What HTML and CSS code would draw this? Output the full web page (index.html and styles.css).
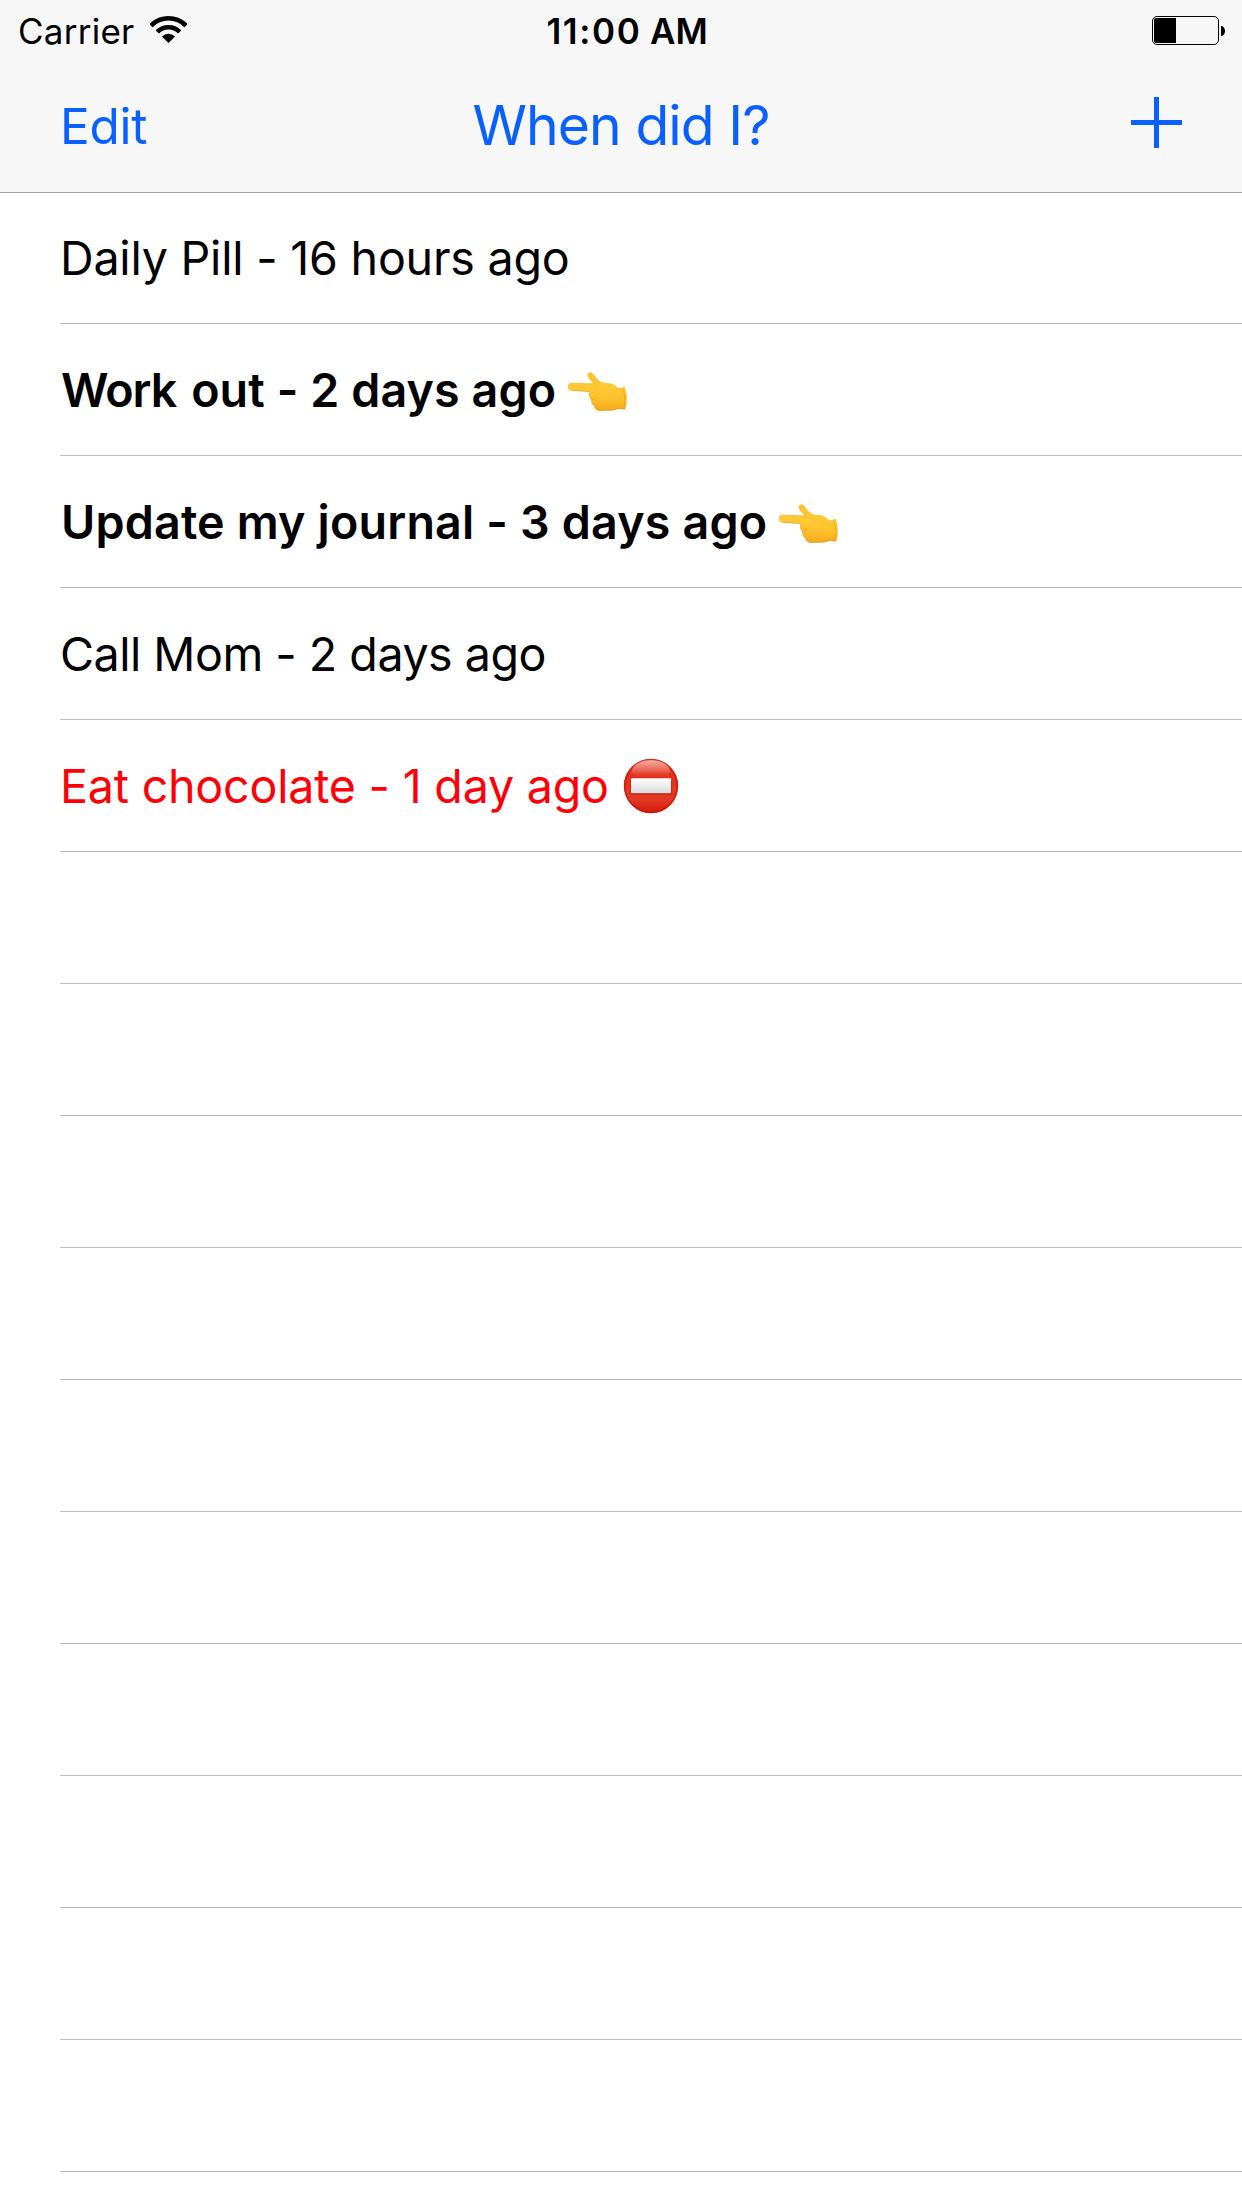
FILE: index.html
```html
<!DOCTYPE html>
<html lang="en">
<head>
<meta charset="utf-8">
<title>When did I?</title>
<link rel="stylesheet" href="styles.css">
</head>
<body>
<svg class="defs" width="0" height="0" aria-hidden="true">
  <defs>
    <linearGradient id="skin" x1="0" y1="0" x2="0" y2="1">
      <stop offset="0" stop-color="#fcc02c"/>
      <stop offset=".4" stop-color="#ffc936"/>
      <stop offset=".7" stop-color="#fdc02b"/>
      <stop offset="1" stop-color="#f4ab1a"/>
    </linearGradient>
    <linearGradient id="red" x1="0" y1="0" x2="0" y2="1">
      <stop offset="0" stop-color="#e8604c"/>
      <stop offset=".3" stop-color="#e2301c"/>
      <stop offset=".75" stop-color="#e23a22"/>
      <stop offset="1" stop-color="#d81608"/>
    </linearGradient>
    <linearGradient id="gloss" x1="0" y1="0" x2="0" y2="1">
      <stop offset="0" stop-color="#fff" stop-opacity=".5"/>
      <stop offset=".75" stop-color="#fff" stop-opacity="0"/>
    </linearGradient>
    <linearGradient id="bar" x1="0" y1="0" x2="0" y2="1">
      <stop offset="0" stop-color="#fff"/>
      <stop offset="1" stop-color="#d9d9d9"/>
    </linearGradient>
    <symbol id="hand" viewBox="7 10 61 41">
      <path fill="url(#skin)" d="M11 21.700 C6.800 21.700 6.800 29.300 11 29.500 L30 30.800 C28.500 34 29.500 37 31.500 38.500 C31 41 32 43.500 34 44.500 C34.500 48 37 49.700 40 49.700 L51 49.500 C55 49.500 57 47.600 60 47.700 L65 48.400 C67.500 42 67.500 33 64.700 25.600 C62 27.300 59 27.500 56.500 25.700 C53.500 23.200 51.500 22.200 47.500 22.100 C42.500 21.900 39 20.300 36.700 17.500 C34.700 15 33.700 13.200 32 11.800 C29.700 10.300 26.900 12 27.700 14.900 C28.400 17.500 31 20 33.300 22.200 Z"/>
      <path fill="none" stroke="#e0900f" stroke-width=".9" stroke-linecap="round" opacity=".6" d="M12 29.400 L29.500 30.600 M30 31 C28.800 34 29.800 37 31.500 38.500 M31.700 39 C31.300 41.500 32.300 43.800 34.200 44.500 M34.500 45.500 C35.500 48.500 38 49.300 40.500 49.300 L51 49 C55 49 57 47.200 60 47.300 L64.800 48 M32 38.500 C34 39.500 36 38 36 36"/>
      <path fill="none" stroke="#ec9d14" stroke-width=".8" opacity=".7" d="M62.500 27 C65.500 34 65.300 42 63.500 47.600 M33 22.500 C34.500 22.700 36 23.300 36.500 24.500"/>
    </symbol>
    <symbol id="stop" viewBox="0 0 56 56">
      <circle cx="28" cy="28" r="27.200" fill="url(#red)"/>
      <circle cx="28" cy="28" r="26.300" fill="none" stroke="#c31208" stroke-width="1.600" opacity=".7"/>
      <ellipse cx="28" cy="13" rx="19" ry="11" fill="url(#gloss)"/>
      <rect x="7.500" y="21.200" width="41" height="15.200" rx="1.200" fill="#8f1108" opacity=".6"/>
      <rect x="8" y="20.300" width="40" height="15" rx="1" fill="url(#bar)"/>
    </symbol>
    <clipPath id="fan"><path d="M18.500 27 L-8.500 0.500 V-10 H45.500 V0.500 Z"/></clipPath>
  </defs>
</svg>

<header class="header">
  <div class="status">
    <div class="network">
      <span class="carrier">Carrier</span>
      <svg class="wifi" viewBox="0 0 37 27">
        <g clip-path="url(#fan)">
          <circle cx="18.500" cy="27" r="24.700" fill="none" stroke="#000" stroke-width="4.600"/>
          <circle cx="18.500" cy="27" r="15.800" fill="none" stroke="#000" stroke-width="4.600"/>
          <circle cx="18.500" cy="27" r="9.200"/>
        </g>
      </svg>
    </div>
    <div class="clock"><span class="digits">11:00</span> AM</div>
    <svg class="battery" viewBox="0 0 73 29">
      <rect x=".5" y=".5" width="66" height="28" rx="4.500" fill="none" stroke="#000"/>
      <path d="M4 2 H24 V27 H4 Q2 27 2 25 V4 Q2 2 4 2 Z M69 10 C74.300 10 74.300 20 69 20 Z"/>
    </svg>
  </div>
  <nav class="navbar">
    <a class="edit">Edit</a>
    <h1 class="title">When did I?</h1>
    <svg class="add" viewBox="0 0 51 51"><path d="M23 0 H28 V23 H51 V28 H28 V51 H23 V28 H0 V23 H23 Z"/></svg>
  </nav>
</header>

<ul class="list">
  <li class="row pill">Daily Pill - 16 hours ago</li>
  <li class="row due"><span><span class="snug">Work</span> out - 2 days ago</span><svg class="hand"><use href="#hand"/></svg></li>
  <li class="row due journal"><span>Update my journal - 3 days ago</span><svg class="hand"><use href="#hand"/></svg></li>
  <li class="row call">Call Mom - 2 days ago</li>
  <li class="row avoid"><span>Eat chocolate - 1 day ago</span><svg class="stop"><use href="#stop"/></svg></li>
  <li class="row"></li>
  <li class="row"></li>
  <li class="row"></li>
  <li class="row"></li>
  <li class="row"></li>
  <li class="row"></li>
  <li class="row"></li>
  <li class="row"></li>
  <li class="row"></li>
  <li class="row"></li>
</ul>
</body>
</html>
```
FILE: styles.css
```css
* { box-sizing: border-box; }

body {
  margin: 0;
  height: 2208px;
  overflow: hidden;
  background: #fff;
  color: #000;
  font-family: Inter, "Liberation Sans", sans-serif;
}

.defs { display: block; height: 0; }

.header {
  height: 193px;
  background: #f7f7f7;
  border-bottom: 1px solid #a2a2a2;
}

.status {
  display: grid;
  grid-template-columns: 1fr auto 1fr;
  height: 60px;
  padding: 0 17px 0 18px;
  font-size: 35px;
  line-height: 62px;
}

.network { display: flex; }
.carrier { letter-spacing: 0.25px; }
.wifi { width: 37px; height: 27px; margin: 16px 0 0 16px; }

.clock { font-weight: 600; margin-left: 11px; letter-spacing: -0.1px; }
.digits { letter-spacing: 1.6px; }

.battery { width: 73px; height: 29px; margin-top: 16px; justify-self: end; }

.navbar {
  display: grid;
  grid-template-columns: 1fr auto 1fr;
  height: 132px;
  padding: 0 60px;
  color: #0a60ff;
}

.edit { font-size: 49.5px; line-height: 132px; letter-spacing: -0.3px; }

.title {
  margin: 0;
  font-size: 55.3px;
  font-weight: 400;
  line-height: 130px;
  letter-spacing: -0.95px;
}

.add {
  width: 51px;
  height: 51px;
  margin-top: 37px;
  justify-self: end;
  fill: currentColor;
}

.list {
  margin: 0 0 0 60px;
  padding: 0;
  list-style: none;
}

.row {
  display: flex;
  align-items: center;
  height: 132px;
  border-bottom: 1px solid #bcbcbc;
  font-size: 46.6px;
  white-space: pre;
}
.row:first-child { height: 131px; }

.pill { letter-spacing: -0.22px; }
.call { letter-spacing: -0.5px; }

.due { padding-left: 1px; font-weight: 600; letter-spacing: 0.1px; }
.journal { letter-spacing: 0.18px; }
.snug { margin-right: 3px; letter-spacing: -1px; }

.avoid { color: #ff0008; letter-spacing: -0.22px; }

.hand { width: 61px; height: 41px; margin: 3px 0 0 11px; }
.stop { width: 56px; height: 56px; margin: 0 0 0 14px; }
```
